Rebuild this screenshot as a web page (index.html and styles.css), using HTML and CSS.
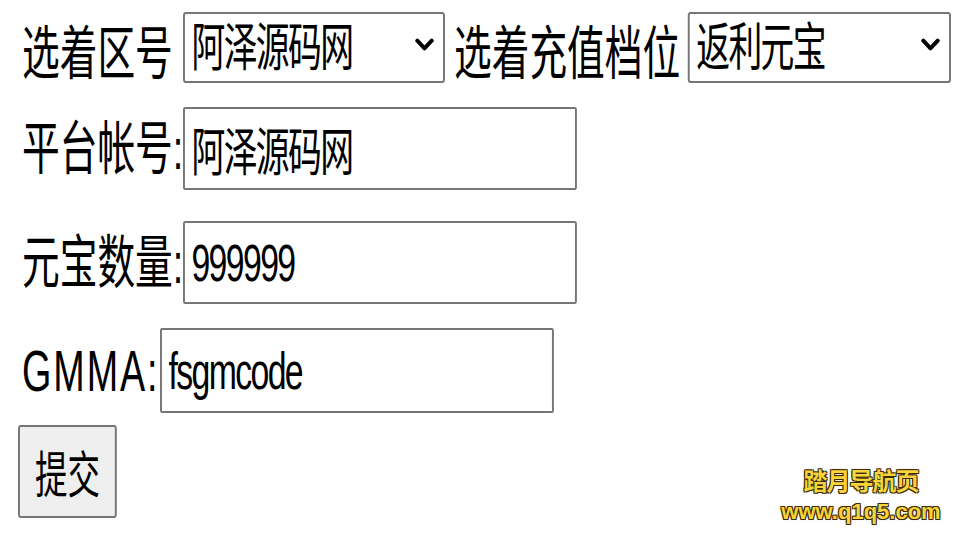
FILE: index.html
```html
<!DOCTYPE html>
<html lang="zh-CN">
<head>
<meta charset="utf-8">
<title>充值</title>
<link rel="stylesheet" href="styles.css">
</head>
<body>
<form class="form">
  <div class="row row-1">
    <label class="lbl lbl-top w-zone"><span class="sq">选着区号</span></label>
    <span class="ctl sel-1">
      <select class="sel sel-left"><option>阿泽源码网</option></select>
      <svg class="chev" viewBox="0 0 18 12"><path d="M2.2 2.4 L9 9.6 L15.8 2.4" fill="none" stroke="#000" stroke-width="3.8" stroke-linecap="round" stroke-linejoin="round"/></svg>
    </span>
    <label class="lbl lbl-top w-tier"><span class="sq">选着充值档位</span></label>
    <span class="ctl sel-2">
      <select class="sel sel-right"><option>返利元宝</option></select>
      <svg class="chev" viewBox="0 0 18 12"><path d="M2.2 2.4 L9 9.6 L15.8 2.4" fill="none" stroke="#000" stroke-width="3.8" stroke-linecap="round" stroke-linejoin="round"/></svg>
    </span>
  </div>
  <div class="row row-2">
    <label class="lbl w-acct"><span class="sq">平台帐号:</span></label>
    <span class="ctl in-wide"><input class="txt" type="text" value="阿泽源码网"></span>
  </div>
  <div class="row row-3">
    <label class="lbl w-acct"><span class="sq">元宝数量:</span></label>
    <span class="ctl in-wide"><input class="txt" type="text" value="999999"></span>
  </div>
  <div class="row row-4">
    <label class="lbl lbl-latin w-gm"><span class="sq">GMMA:</span></label>
    <span class="ctl in-gm"><input class="txt txt-tall" type="text" value="fsgmcode"></span>
  </div>
  <div class="row row-5">
    <span class="ctl btn-wrap"><button class="btn" type="button">提交</button></span>
  </div>
</form>
<div class="mark">
  <div class="mark-1">踏月导航页</div>
  <div class="mark-2">www.q1q5.com</div>
</div>
</body>
</html>
```

FILE: styles.css
```css
html, body {
  margin: 0;
  padding: 0;
  overflow: hidden;
  background: #ffffff;
}

body {
  width: 960px;
  height: 540px;
  position: relative;
  font-family: "Liberation Sans", "Noto Sans CJK SC", sans-serif;
  color: #000;
}

.form {
  width: 960px;
  box-sizing: border-box;
  padding: 12px 0 0 22px;
  display: flex;
  flex-direction: column;
  align-items: flex-start;
}

.row {
  display: flex;
  align-items: center;
}

.row-2 { margin-top: 24px; }
.row-3 { margin-top: 31px; }
.row-4 { margin-top: 24px; }
.row-5 { margin-top: 12px; margin-left: -4px; }

/* labels: text is drawn horizontally condensed, like the reference */
.lbl {
  display: block;
  font-size: 58px;
  line-height: 1;
  color: #000;
  white-space: nowrap;
}

.sq {
  display: inline-block;
  transform: scaleX(0.65);
  transform-origin: 0 0;
}

.lbl-top { padding-top: 13px; }
.lbl-latin { letter-spacing: 3px; }

.w-zone { width: 151px; margin-right: 10px; }
.w-tier { width: 226px; margin-left: 9px; margin-right: 8px; }
.w-acct { width: 161px; }
.w-gm { width: 138px; }

/* control wrappers keep the visual width; the control inside is condensed */
.ctl {
  position: relative;
  display: block;
}

.sel-1 { width: 262px; }
.sel-2 { width: 263px; }
.in-wide { width: 394px; }
.in-gm { width: 393px; }
.btn-wrap { width: 99px; }

.sel {
  -webkit-appearance: none;
  appearance: none;
  display: block;
  height: 71px;
  box-sizing: border-box;
  margin: 0;
  padding: 0 0 0 10px;
  border-style: solid;
  border-color: #767676;
  border-width: 2px 3px;
  border-radius: 4px;
  background: #fff;
  color: #000;
  font-family: "Liberation Sans", "Noto Sans CJK SC", sans-serif;
  font-size: 52px;
  letter-spacing: -2.5px;
  outline: none;
  transform: scaleX(0.65);
}

.sel-left {
  width: 403px;
  transform-origin: 0 0;
}

.sel-right {
  width: 405px;
  margin-left: -142px;
  transform-origin: 100% 0;
}

.chev {
  position: absolute;
  right: 11px;
  top: 26px;
  width: 19px;
  height: 13px;
  pointer-events: none;
}

.txt {
  display: block;
  width: 606px;
  height: 83px;
  box-sizing: border-box;
  margin: 0;
  padding: 0 10px;
  border-style: solid;
  border-color: #767676;
  border-width: 2px 3px;
  border-radius: 3px;
  background: #fff;
  color: #000;
  font-family: "Liberation Sans", "Noto Sans CJK SC", sans-serif;
  font-size: 52px;
  letter-spacing: -2.5px;
  outline: none;
  transform: scaleX(0.65);
  transform-origin: 0 0;
}

.txt-tall { height: 85px; }

.btn {
  display: block;
  width: 152px;
  height: 93px;
  box-sizing: border-box;
  margin: 0;
  padding: 8px 0 0 0;
  border-style: solid;
  border-color: #767676;
  border-width: 2px 3px;
  border-radius: 4px;
  background: #efefef;
  color: #000;
  font-family: "Liberation Sans", "Noto Sans CJK SC", sans-serif;
  font-size: 50px;
  line-height: 1;
  transform: scaleX(0.65);
  transform-origin: 0 0;
}

/* watermark overlay */
.mark {
  position: absolute;
  left: 776px;
  top: 466px;
  width: 170px;
  text-align: center;
  color: #f7d53a;
}

.mark-1 {
  font-family: "Noto Sans CJK SC", sans-serif;
  font-weight: 700;
  font-size: 24px;
  line-height: 28px;
  letter-spacing: -1px;
  text-shadow: -1px -1px 0 #3a2a08, 1px -1px 0 #3a2a08, -1px 1px 0 #3a2a08, 1px 1px 0 #3a2a08, 0 0 3px #cdb98a;
}

.mark-2 {
  margin-top: 5px;
  font-family: "Liberation Sans", sans-serif;
  font-weight: 700;
  font-size: 22px;
  line-height: 26px;
  text-shadow: -1px -1px 0 #3a2a08, 1px -1px 0 #3a2a08, -1px 1px 0 #3a2a08, 1px 1px 0 #3a2a08, 0 0 3px #cdb98a;
}
```
